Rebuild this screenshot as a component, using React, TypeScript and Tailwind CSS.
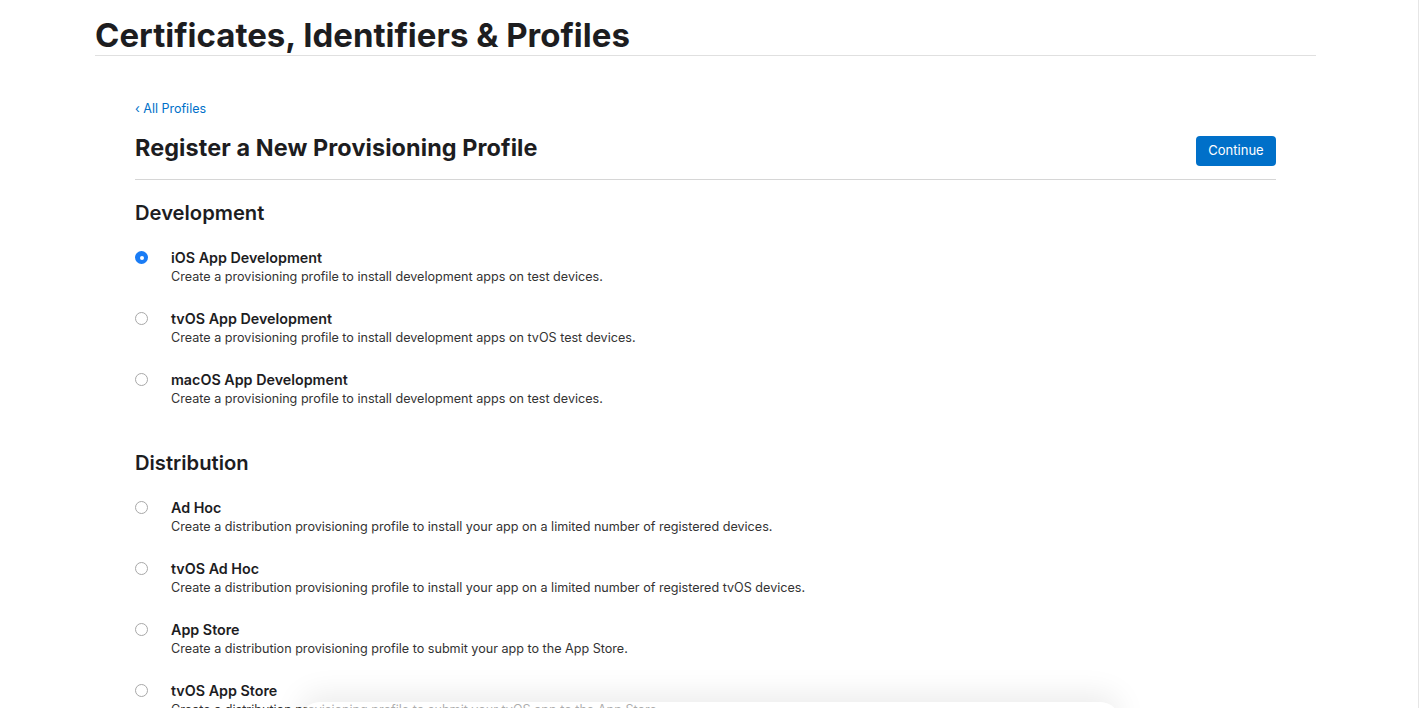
import React from 'react';

type Option = { title: string; desc: string };

const development: Option[] = [
  { title: 'iOS App Development', desc: 'Create a provisioning profile to install development apps on test devices.' },
  { title: 'tvOS App Development', desc: 'Create a provisioning profile to install development apps on tvOS test devices.' },
  { title: 'macOS App Development', desc: 'Create a provisioning profile to install development apps on test devices.' },
];

const distribution: Option[] = [
  { title: 'Ad Hoc', desc: 'Create a distribution provisioning profile to install your app on a limited number of registered devices.' },
  { title: 'tvOS Ad Hoc', desc: 'Create a distribution provisioning profile to install your app on a limited number of registered tvOS devices.' },
  { title: 'App Store', desc: 'Create a distribution provisioning profile to submit your app to the App Store.' },
  { title: 'tvOS App Store', desc: 'Create a distribution provisioning profile to submit your tvOS app to the App Store.' },
];

function Radio({ checked }: { checked: boolean }) {
  return checked ? (
    <span className="mt-[2px] flex h-[13px] w-[13px] shrink-0 items-center justify-center rounded-full bg-[#1a7cf5]">
      <span className="h-[4px] w-[4px] rounded-full bg-white" />
    </span>
  ) : (
    <span className="mt-[2px] h-[13px] w-[13px] shrink-0 rounded-full border border-[#a8a8a8] bg-white" />
  );
}

function OptionRow({ option, checked }: { option: Option; checked: boolean }) {
  return (
    <label className="flex gap-[23px]">
      <Radio checked={checked} />
      <div>
        <div className="text-[14.3px] font-semibold leading-[18px] text-[#1d1d1f]">{option.title}</div>
        <div className="mt-[1px] text-[12.6px] leading-[18px] text-[#333]">{option.desc}</div>
      </div>
    </label>
  );
}

export default function App() {
  return (
    <div className="relative h-screen overflow-hidden bg-white font-['Inter',sans-serif] text-[#1d1d1f]">
      <div className="absolute right-[3px] top-0 h-full w-px bg-[#e6e6e6]" />

      <div className="ml-[95px] w-[1221px] pt-[15px]">
        <h1 className="text-[33px] font-bold leading-[40px]">Certificates, Identifiers &amp; Profiles</h1>
        <div className="h-px bg-[#e0e0e0]" />

        <div className="mx-[40px] pt-[45px]">
          <a className="block text-[12.5px] leading-[16px] text-[#0070c9]">‹ All Profiles</a>

          <div className="flex items-start justify-between pb-[13px]">
            <h2 className="mt-[17px] text-[23.4px] font-bold leading-[28px] tracking-[0.1px]">Register a New Provisioning Profile</h2>
            <button className="mt-[19px] h-[30px] w-[80px] rounded-[4px] bg-[#0070c9] text-[13px] text-white">Continue</button>
          </div>
          <div className="h-px bg-[#d6d6d6]" />

          <h3 className="mt-[21px] text-[20.2px] font-semibold leading-[24px]">Development</h3>
          <div className="mt-[24px] flex flex-col gap-[24px]">
            {development.map((o, i) => (
              <OptionRow key={o.title} option={o} checked={i === 0} />
            ))}
          </div>

          <h3 className="mt-[43px] text-[20.2px] font-semibold leading-[24px]">Distribution</h3>
          <div className="mt-[24px] flex flex-col gap-[24px]">
            {distribution.map((o) => (
              <OptionRow key={o.title} option={o} checked={false} />
            ))}
          </div>
        </div>
      </div>

      {/* bottom frosted bar */}
      <div className="absolute left-[300px] top-[702px] h-[40px] w-[820px] rounded-[20px] bg-white/60 shadow-[0_-8px_30px_rgba(0,0,0,0.08)]" />
    </div>
  );
}
